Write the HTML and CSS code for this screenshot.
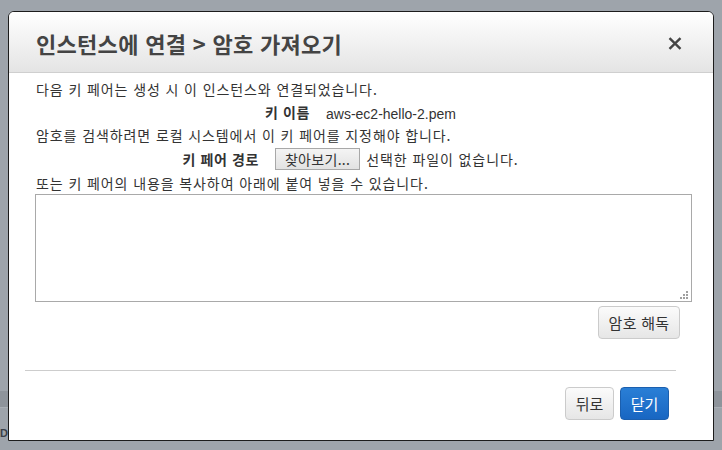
FILE: index.html
```html
<!DOCTYPE html>
<html lang="ko">
<head>
<meta charset="utf-8">
<link rel="stylesheet" href="styles.css">
</head>
<body>
<div class="page">
  <div class="page-top"></div>
  <div class="page-band"></div>
  <div class="page-row"><span class="page-letter">D</span></div>
</div>

<div class="modal">
  <div class="modal-header">
    <h1 class="modal-title">인스턴스에 연결 &gt; 암호 가져오기</h1>
    <span class="modal-close" aria-label="닫기">
      <svg width="14" height="13" viewBox="0 0 14 13"><path d="M1.5 1.2 L12.5 11.8 M12.5 1.2 L1.5 11.8" stroke="#444" stroke-width="2.4" fill="none"/></svg>
    </span>
  </div>
  <div class="modal-body">
    <p class="line">다음 키 페어는 생성 시 이 인스턴스와 연결되었습니다.</p>
    <div class="form-row row-name">
      <span class="label">키 이름</span>
      <span class="value">aws-ec2-hello-2.pem</span>
    </div>
    <p class="line">암호를 검색하려면 로컬 시스템에서 이 키 페어를 지정해야 합니다.</p>
    <div class="form-row row-path">
      <span class="label">키 페어 경로</span>
      <span class="file-btn">찾아보기...</span>
      <span class="file-status">선택한 파일이 없습니다.</span>
    </div>
    <p class="line">또는 키 페어의 내용을 복사하여 아래에 붙여 넣을 수 있습니다.</p>
    <div class="area-wrap">
      <textarea class="key-area"></textarea>
      <svg class="grip" width="8" height="8" viewBox="0 0 8 8">
        <rect x="6" y="0" width="2" height="2" fill="#a0a0a0"/>
        <rect x="3" y="3" width="2" height="2" fill="#a0a0a0"/>
        <rect x="6" y="3" width="2" height="2" fill="#a0a0a0"/>
        <rect x="0" y="6" width="2" height="2" fill="#a0a0a0"/>
        <rect x="3" y="6" width="2" height="2" fill="#a0a0a0"/>
        <rect x="6" y="6" width="2" height="2" fill="#a0a0a0"/>
      </svg>
    </div>
    <div class="decrypt-row">
      <button class="btn btn-light btn-decrypt">암호 해독</button>
    </div>
  </div>
  <div class="modal-divider"></div>
  <div class="modal-footer">
    <button class="btn btn-light">뒤로</button>
    <button class="btn btn-primary">닫기</button>
  </div>
</div>
</body>
</html>
```
FILE: styles.css
```css
html, body {
  margin: 0;
  padding: 0;
}
body {
  width: 722px;
  height: 450px;
  overflow: hidden;
  background: #9ea4ab;
  font-family: "Noto Sans CJK KR", "Liberation Sans", sans-serif;
  position: relative;
}
.page {
  display: flex;
  flex-direction: column;
}
.page-top {
  height: 391px;
}
.page-band {
  height: 16px;
  background: #8e949b;
  border-bottom: 1px solid #a9afb5;
}
.page-row {
  height: 42px;
  padding-top: 10px;
  box-sizing: border-box;
}
.page-letter {
  display: inline-block;
  margin-left: 0;
  font-family: "Liberation Sans", sans-serif;
  font-weight: bold;
  font-size: 11px;
  line-height: 16px;
  color: #3a3f48;
}

.modal {
  position: absolute;
  left: 8px;
  top: 11px;
  width: 706px;
  height: 430px;
  box-sizing: border-box;
  border: 1px solid #1c1c1c;
  border-radius: 6px 6px 0 0;
  background: #fff;
  display: flex;
  flex-direction: column;
  color: #333;
}
.modal-header {
  height: 61px;
  box-sizing: border-box;
  border-bottom: 1px solid #cfcfcf;
  border-radius: 5px 5px 0 0;
  background: linear-gradient(#ffffff, #e4e4e4);
  display: flex;
  align-items: center;
  justify-content: space-between;
  padding: 2px 31px 0 27px;
}
.modal-title {
  margin: 0;
  font-size: 22px;
  font-weight: bold;
  color: #444;
  letter-spacing: 0.3px;
  line-height: 30px;
}
.modal-close {
  display: flex;
  width: 14px;
  height: 13px;
  margin-top: 1px;
}

.modal-body {
  padding: 6px 22px 0 27px;
  display: flex;
  flex-direction: column;
  font-size: 14px;
  letter-spacing: 0.9px;
}
.line {
  margin: 0;
  height: 20px;
  line-height: 20px;
  white-space: nowrap;
}
.form-row {
  display: flex;
  justify-content: center;
  align-items: center;
  gap: 16px;
  white-space: nowrap;
}
.row-name {
  height: 26px;
  padding-right: 6px;
}
.row-path {
  height: 28px;
  padding-right: 26px;
}
.label {
  font-weight: bold;
  letter-spacing: 0.6px;
}
.value {
  font-family: "Liberation Sans", sans-serif;
  font-size: 14px;
  letter-spacing: 0;
  padding-top: 3px;
}
.file-btn {
  display: inline-flex;
  align-items: center;
  height: 20px;
  padding: 0 9px;
  border: 1px solid #a8a8a8;
  background: linear-gradient(#f4f4f4, #e2e2e2);
  font-size: 14px;
  letter-spacing: 0.3px;
  margin-right: -10px;
}
.file-status {
  letter-spacing: 0.9px;
}
.area-wrap {
  position: relative;
  margin: 1px 0 0 -1px;
  width: 657px;
  height: 108px;
}
.key-area {
  display: block;
  width: 657px;
  height: 108px;
  box-sizing: border-box;
  border: 1px solid #a9a9a9;
  padding: 4px;
  margin: 0;
  resize: none;
  font-family: "Liberation Mono", monospace;
}
.grip {
  position: absolute;
  right: 4px;
  bottom: 3px;
}
.decrypt-row {
  display: flex;
  justify-content: flex-end;
  padding-top: 4px;
  padding-right: 11px;
}
.btn {
  font-family: "Noto Sans CJK KR", "Liberation Sans", sans-serif;
  font-size: 15px;
  height: 33px;
  box-sizing: border-box;
  border-radius: 4px;
  padding: 0 10px;
  line-height: 30px;
  cursor: pointer;
}
.btn-light {
  border: 1px solid #cbcbcb;
  background: linear-gradient(#fbfbfb, #e6e6e6);
  color: #333;
}
.btn-decrypt {
  width: 82px;
  height: 33px;
  padding: 0;
  letter-spacing: 0.3px;
}
.btn-primary {
  border: 1px solid #1b5fae;
  background: linear-gradient(#2a7fd6, #1866c2);
  color: #fff;
}
.modal-divider {
  margin: 31px 0 0 16px;
  width: 651px;
  height: 0;
  border-top: 1px solid #cdcdcd;
}
.modal-footer {
  display: flex;
  justify-content: flex-end;
  gap: 6px;
  padding: 16px 44px 0 0;
}
.modal-footer .btn {
  width: 49px;
  padding: 0;
}
```
